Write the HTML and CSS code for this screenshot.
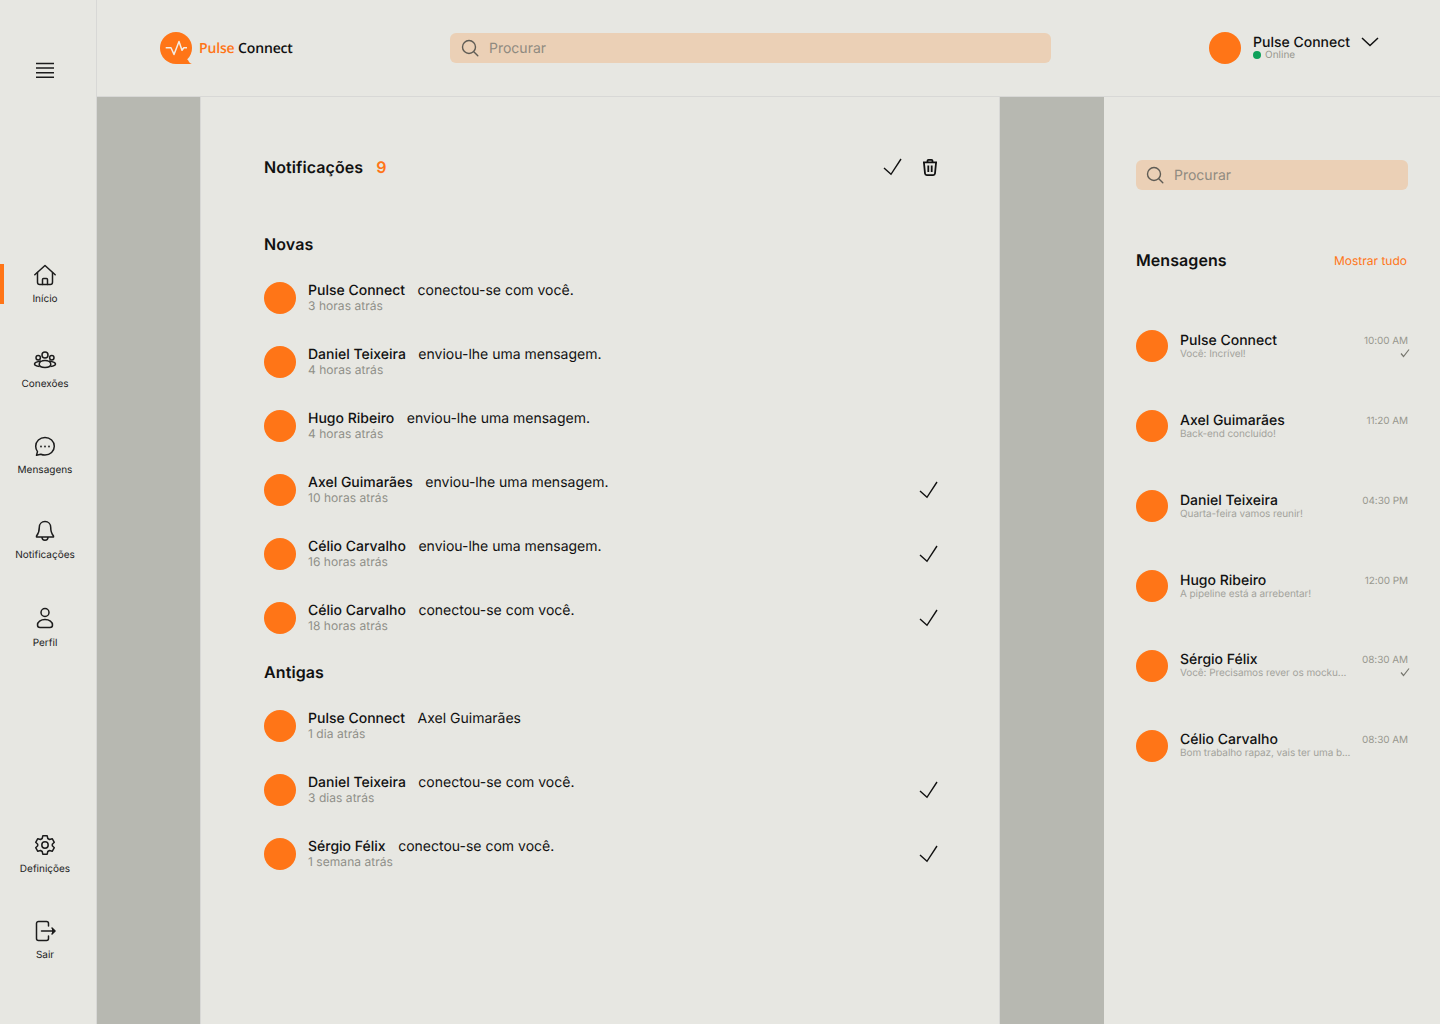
FILE: index.html
```html
<!DOCTYPE html>
<html lang="pt">
<head>
    <meta charset="UTF-8">
    <title>Pulse Connect</title>
    <link rel="stylesheet" href="styles.css">
</head>
<body>
<div class="app">
    <aside class="sidebar">
        <div class="menu-btn">
            <svg width="24" height="24" viewBox="0 0 24 24" fill="none" stroke="#1c1c1c" stroke-width="1.5"><path d="M3 4.500h18M3 9h18M3 13.700h18M3 18.300h18"/></svg>
        </div>
        <nav class="nav-main">
            <a class="nav-item active">
                <svg width="24" height="24" viewBox="0 0 24 24" fill="none" stroke="#1c1c1c" stroke-width="1.5" stroke-linejoin="round" stroke-linecap="round"><path d="M1.800 10.800 12 1.500l10.200 9.300"/><path d="M4.500 8.500v9.700a2.300 2.300 0 0 0 2.300 2.300h10.400a2.300 2.300 0 0 0 2.300-2.300V8.500"/><path d="M9.500 20.500v-5a1 1 0 0 1 1-1h3a1 1 0 0 1 1 1v5"/></svg>
                <span>Início</span>
            </a>
            <a class="nav-item">
                <svg width="24" height="24" viewBox="0 0 24 24" fill="none" stroke="#1c1c1c" stroke-width="1.5"><circle cx="12" cy="6" r="3"/><circle cx="5.200" cy="8.800" r="2.200"/><circle cx="18.800" cy="8.800" r="2.200"/><path d="M8 12c-3 .5-6.500 1.200-6.500 3 0 1.600 2.600 2.200 5 2.500"/><path d="M16 12c3 .5 6.500 1.200 6.500 3 0 1.600-2.600 2.200-5 2.500"/><path d="M12 11.500c-3.400 0-5.800 1.700-5.800 3.700s2.400 3.200 5.800 3.200 5.800-1.200 5.800-3.200-2.400-3.700-5.800-3.700Z"/></svg>
                <span>Conexões</span>
            </a>
            <a class="nav-item">
                <svg width="24" height="24" viewBox="0 0 24 24" fill="none" stroke="#1c1c1c" stroke-width="1.5" stroke-linejoin="round"><path d="M12 2.500c5.200 0 9.300 3.900 9.300 8.800s-4.100 8.800-9.300 8.800c-1.500 0-2.900-.3-4.200-.9l-4.300 1.100 1-3.700a8.500 8.500 0 0 1-1.800-5.300C2.700 6.400 6.800 2.500 12 2.500Z"/><circle cx="8" cy="11.500" r=".9" fill="#1c1c1c" stroke="none"/><circle cx="12" cy="11.500" r=".9" fill="#1c1c1c" stroke="none"/><circle cx="16" cy="11.500" r=".9" fill="#1c1c1c" stroke="none"/></svg>
                <span>Mensagens</span>
            </a>
            <a class="nav-item">
                <svg width="24" height="24" viewBox="0 0 24 24" fill="none" stroke="#1c1c1c" stroke-width="1.5" stroke-linejoin="round"><path d="M12 1.500c-3.400 0-5.700 2.600-5.700 5.800 0 4.200-.6 6.200-2.800 8.700v1h17v-1c-2.200-2.500-2.800-4.500-2.800-8.700C17.700 4.100 15.400 1.500 12 1.500Z"/><path d="M9 17c0 2 1.300 3.300 3 3.300s3-1.300 3-3.300"/></svg>
                <span>Notificações</span>
            </a>
            <a class="nav-item profile">
                <svg width="24" height="24" viewBox="0 0 24 24" fill="none" stroke="#1c1c1c" stroke-width="1.5"><circle cx="12" cy="5.500" r="4"/><path d="M12 12.500c-4.400 0-7.500 2.500-7.500 5.500 0 1.500 1 2.500 2.500 2.500h10c1.500 0 2.500-1 2.500-2.500 0-3-3.100-5.500-7.500-5.500Z"/></svg>
                <span>Perfil</span>
            </a>
        </nav>
        <nav class="nav-bottom">
            <a class="nav-item">
                <svg width="24" height="24" viewBox="0 0 24 24" fill="none" stroke="#1c1c1c" stroke-width="1.5" stroke-linejoin="round"><circle cx="12" cy="12" r="3.200"/><path d="M9.800 2.800h4.400l.6 2.700 1.700 1 2.700-.8 2.100 3.600-2 1.900v1.600l2 1.900-2.100 3.600-2.700-.8-1.700 1-.6 2.700H9.800l-.6-2.700-1.700-1-2.700.8-2.100-3.600 2-1.900v-1.600l-2-1.900 2.100-3.600 2.700.8 1.700-1Z"/></svg>
                <span>Definições</span>
            </a>
            <a class="nav-item">
                <svg width="24" height="24" viewBox="0 0 24 24" fill="none" stroke="#1c1c1c" stroke-width="1.500" stroke-linejoin="round" stroke-linecap="round"><path d="M15.500 7V4.500a2 2 0 0 0-2-2H5.500a2 2 0 0 0-2 2v15a2 2 0 0 0 2 2h8a2 2 0 0 0 2-2V17"/><path d="M8.500 12h13"/><path d="m19 9 3 3-3 3" fill="#1c1c1c"/></svg>
                <span>Sair</span>
            </a>
        </nav>
    </aside>

    <div class="content">
        <header class="topbar">
            <div class="logo">
                <svg width="33" height="33" viewBox="0 0 33 33"><circle cx="16" cy="16" r="16" fill="#ff7517"/><path d="M16 32h16c-1.800-.5-3-1.500-3.700-3.500L24 24Z" fill="#ff7517"/><path d="M5.700 15.700H11l3 6.800 5-13 3 8.700 1.800-2.500H27" fill="none" stroke="#f3ece4" stroke-width="1.500" stroke-linejoin="round"/></svg>
                <span class="logo-text"><em>Pulse</em> Connect</span>
            </div>
            <div class="search search-top">
                <svg width="20" height="20" viewBox="0 0 20 20" fill="none" stroke="#5f5c55" stroke-width="1.400" stroke-linecap="round"><circle cx="9" cy="9" r="6.500"/><path d="m14 14 3.800 3.800"/></svg>
                <span>Procurar</span>
            </div>
            <div class="user">
                <div class="avatar"></div>
                <div class="user-info">
                    <div class="name">Pulse Connect</div>
                    <div class="status"><i class="dot"></i>Online</div>
                </div>
                <svg class="chevron" width="18" height="10" viewBox="0 0 18 10" fill="none" stroke="#111" stroke-width="1.500"><path d="m1 1 8 7.500L17 1"/></svg>
            </div>
        </header>

        <div class="body">
            <div class="gutter"></div>
            <main class="panel">
                <div class="panel-head">
                    <h1>Notificações <b>9</b></h1>
                    <div class="panel-actions">
                        <svg width="24" height="24" viewBox="0 0 24 24" fill="none" stroke="#111" stroke-width="1.400"><path d="m4 13 7 6.300L21 4"/></svg>
                        <svg width="24" height="24" viewBox="0 0 24 24" fill="none" stroke="#111" stroke-width="1.800" stroke-linejoin="round"><path d="M6 8l1 10.500a1.800 1.800 0 0 0 1.800 1.600h6.400a1.800 1.800 0 0 0 1.800-1.600L18 8"/><path d="M5 7.300h14M9.500 7V5.800a1 1 0 0 1 1-1h3a1 1 0 0 1 1 1V7"/><path d="M10.300 10.500v6.500M13.700 10.500v6.500"/></svg>
                    </div>
                </div>

                <h2 class="group-title">Novas</h2>
                <ul class="notif-list">
                    <li class="notif">
                        <div class="avatar"></div>
                        <div class="notif-text"><p><strong>Pulse Connect</strong>conectou-se com você.</p><small>3 horas atrás</small></div>
                    </li>
                    <li class="notif">
                        <div class="avatar"></div>
                        <div class="notif-text"><p><strong>Daniel Teixeira</strong>enviou-lhe uma mensagem.</p><small>4 horas atrás</small></div>
                    </li>
                    <li class="notif">
                        <div class="avatar"></div>
                        <div class="notif-text"><p><strong>Hugo Ribeiro</strong>enviou-lhe uma mensagem.</p><small>4 horas atrás</small></div>
                    </li>
                    <li class="notif">
                        <div class="avatar"></div>
                        <div class="notif-text"><p><strong>Axel Guimarães</strong>enviou-lhe uma mensagem.</p><small>10 horas atrás</small></div>
                        <svg class="check" width="24" height="24" viewBox="0 0 24 24" fill="none" stroke="#111" stroke-width="1.400"><path d="m4 13 7 6.300L21 4"/></svg>
                    </li>
                    <li class="notif">
                        <div class="avatar"></div>
                        <div class="notif-text"><p><strong>Célio Carvalho</strong>enviou-lhe uma mensagem.</p><small>16 horas atrás</small></div>
                        <svg class="check" width="24" height="24" viewBox="0 0 24 24" fill="none" stroke="#111" stroke-width="1.400"><path d="m4 13 7 6.300L21 4"/></svg>
                    </li>
                    <li class="notif">
                        <div class="avatar"></div>
                        <div class="notif-text"><p><strong>Célio Carvalho</strong>conectou-se com você.</p><small>18 horas atrás</small></div>
                        <svg class="check" width="24" height="24" viewBox="0 0 24 24" fill="none" stroke="#111" stroke-width="1.400"><path d="m4 13 7 6.300L21 4"/></svg>
                    </li>
                </ul>

                <h2 class="group-title old">Antigas</h2>
                <ul class="notif-list">
                    <li class="notif">
                        <div class="avatar"></div>
                        <div class="notif-text"><p><strong>Pulse Connect</strong>Axel Guimarães</p><small>1 dia atrás</small></div>
                    </li>
                    <li class="notif">
                        <div class="avatar"></div>
                        <div class="notif-text"><p><strong>Daniel Teixeira</strong>conectou-se com você.</p><small>3 dias atrás</small></div>
                        <svg class="check" width="24" height="24" viewBox="0 0 24 24" fill="none" stroke="#111" stroke-width="1.400"><path d="m4 13 7 6.300L21 4"/></svg>
                    </li>
                    <li class="notif">
                        <div class="avatar"></div>
                        <div class="notif-text"><p><strong>Sérgio Félix</strong>conectou-se com você.</p><small>1 semana atrás</small></div>
                        <svg class="check" width="24" height="24" viewBox="0 0 24 24" fill="none" stroke="#111" stroke-width="1.400"><path d="m4 13 7 6.300L21 4"/></svg>
                    </li>
                </ul>
            </main>
            <div class="gutter"></div>

            <section class="messages">
                <div class="search">
                    <svg width="20" height="20" viewBox="0 0 20 20" fill="none" stroke="#5f5c55" stroke-width="1.400" stroke-linecap="round"><circle cx="9" cy="9" r="6.500"/><path d="m14 14 3.800 3.800"/></svg>
                    <span>Procurar</span>
                </div>
                <div class="messages-head">
                    <h2>Mensagens</h2>
                    <a>Mostrar tudo</a>
                </div>
                <ul class="msg-list">
                    <li class="msg">
                        <div class="avatar"></div>
                        <div class="msg-text"><div class="name">Pulse Connect</div><small>Você: Incrível!</small></div>
                        <div class="msg-meta"><time>10:00 AM</time><svg width="10" height="10" viewBox="0 0 10 10" fill="none" stroke="#77776f" stroke-width="1.200"><path d="m1 5.500 2.500 3L9 1.500"/></svg></div>
                    </li>
                    <li class="msg">
                        <div class="avatar"></div>
                        <div class="msg-text"><div class="name">Axel Guimarães</div><small>Back-end concluído!</small></div>
                        <div class="msg-meta"><time>11:20 AM</time></div>
                    </li>
                    <li class="msg">
                        <div class="avatar"></div>
                        <div class="msg-text"><div class="name">Daniel Teixeira</div><small>Quarta-feira vamos reunir!</small></div>
                        <div class="msg-meta"><time>04:30 PM</time></div>
                    </li>
                    <li class="msg">
                        <div class="avatar"></div>
                        <div class="msg-text"><div class="name">Hugo Ribeiro</div><small>A pipeline está a arrebentar!</small></div>
                        <div class="msg-meta"><time>12:00 PM</time></div>
                    </li>
                    <li class="msg">
                        <div class="avatar"></div>
                        <div class="msg-text up"><div class="name">Sérgio Félix</div><small>Você: Precisamos rever os mocku...</small></div>
                        <div class="msg-meta up"><time>08:30 AM</time><svg width="10" height="10" viewBox="0 0 10 10" fill="none" stroke="#77776f" stroke-width="1.200"><path d="m1 5.500 2.500 3L9 1.500"/></svg></div>
                    </li>
                    <li class="msg">
                        <div class="avatar"></div>
                        <div class="msg-text up"><div class="name">Célio Carvalho</div><small>Bom trabalho rapaz, vais ter uma b...</small></div>
                        <div class="msg-meta up"><time>08:30 AM</time></div>
                    </li>
                </ul>
            </section>
        </div>
    </div>
</div>
</body>
</html>
```

FILE: styles.css
```css
*{
    margin: 0;
    padding: 0;
    box-sizing: border-box;
}
html,body{
    height: 100%;
    overflow: hidden;
}
body{
    background: #e7e7e2;
    font-family: "Inter", "Liberation Sans", sans-serif;
    color: #111;
    text-rendering: geometricPrecision;
}
ul{
    list-style: none;
}
svg{
    flex: none;
}
.app{
    display: flex;
    height: 1024px;
}

/* sidebar */
.sidebar{
    width: 97px;
    flex: none;
    border-right: 1px solid #d8d8d6;
    display: flex;
    flex-direction: column;
}
.menu-btn{
    display: flex;
    justify-content: center;
    padding-top: 59px;
    padding-right: 6px;
}
.nav-main{
    margin-top: 181px;
    display: flex;
    flex-direction: column;
    gap: 45.25px;
}
.nav-bottom{
    margin-top: auto;
    margin-bottom: 64px;
    display: flex;
    flex-direction: column;
    gap: 46px;
}
.nav-bottom .nav-item{
    gap: 6px;
}
.nav-bottom svg{
    margin-top: -1px;
}
.nav-item{
    position: relative;
    height: 40px;
    display: flex;
    flex-direction: column;
    align-items: center;
    gap: 5px;
    padding-right: 6px;
    font-size: 10px;
    line-height: 12px;
    color: #222;
}
.nav-item.profile{
    margin-top: 2px;
    gap: 6px;
}
.nav-item.active::before{
    content: "";
    position: absolute;
    left: 0;
    top: 0;
    width: 4px;
    height: 40px;
    background: #ff7517;
}

/* top bar */
.content{
    flex: 1;
    display: flex;
    flex-direction: column;
    min-width: 0;
}
.topbar{
    height: 97px;
    flex: none;
    border-bottom: 1px solid #d8d8d6;
    display: flex;
    align-items: center;
    padding-left: 63px;
}
.logo{
    width: 290px;
    display: flex;
    align-items: center;
    gap: 6px;
}
.logo-text{
    font-family: "Open Sans", sans-serif;
    font-weight: 600;
    font-size: 14px;
    letter-spacing: -.15px;
    color: #111;
}
.logo-text em{
    font-style: normal;
    color: #ff7517;
}
.search{
    height: 30px;
    background: #ebd0b6;
    border-radius: 6px;
    display: flex;
    align-items: center;
    gap: 9px;
    padding-left: 9px;
    font-size: 14px;
    color: #8f8a80;
}
.search-top{
    width: 601px;
    padding-left: 10px;
}
.user{
    margin-left: 158px;
    display: flex;
    align-items: center;
}
.avatar{
    width: 32px;
    height: 32px;
    flex: none;
    border-radius: 50%;
    background: #ff7517;
}
.user-info{
    margin-left: 12px;
    margin-top: -1px;
}
.name{
    font-size: 14px;
    line-height: 15px;
    font-weight: 500;
    color: #111;
}
.status{
    display: flex;
    align-items: center;
    gap: 4px;
    margin-top: -1px;
    font-size: 10px;
    line-height: 12px;
    color: #98988f;
}
.dot{
    width: 8px;
    height: 8px;
    border-radius: 50%;
    background: #0ea15a;
}
.chevron{
    margin-left: 11px;
    margin-top: -12px;
}

/* body columns */
.body{
    flex: 1;
    display: flex;
    min-height: 0;
}
.gutter{
    width: 104px;
    flex: none;
    background: #b7b8b1;
}
.gutter:first-of-type{
    width: 103px;
}
.panel{
    width: 800px;
    flex: none;
    padding: 58px 59px 0 63px;
    border-left: 1px solid #d8d8d6;
    border-right: 1px solid #d8d8d6;
}
.panel-head{
    display: flex;
    justify-content: space-between;
    align-items: center;
    height: 24px;
}
.panel-head h1{
    font-size: 16px;
    font-weight: 600;
    letter-spacing: .08px;
}
.panel-head h1 b{
    color: #ff7517;
    font-weight: 600;
    margin-left: 9px;
}
.panel-actions{
    display: flex;
    gap: 14px;
    margin-right: -2px;
}
.group-title{
    font-size: 16px;
    line-height: 20px;
    font-weight: 600;
    letter-spacing: .1px;
    margin-top: 55px;
    margin-bottom: 28px;
}
.group-title.old{
    margin-top: 28px;
    margin-bottom: 28px;
}
.notif{
    height: 32px;
    display: flex;
    align-items: center;
    margin-bottom: 32px;
}
.notif-list .notif:last-child{
    margin-bottom: 0;
}
.notif-text{
    margin-left: 12px;
    flex: 1;
}
.notif-text p{
    font-size: 14px;
    line-height: 15px;
    color: #111;
}
.notif-text strong{
    font-weight: 500;
    margin-right: 12.5px;
}
.notif-text small{
    display: block;
    margin-top: 1px;
    font-size: 12px;
    line-height: 14px;
    letter-spacing: .05px;
    color: #8f8f88;
}

/* messages column */
.messages{
    flex: 1;
    padding: 63px 32px 0 32px;
}
.messages-head{
    margin-top: 59px;
    height: 22px;
    display: flex;
    justify-content: space-between;
    align-items: center;
}
.messages-head h2{
    font-size: 16px;
    font-weight: 600;
    letter-spacing: .07px;
}
.messages-head a{
    margin-right: 1px;
    font-size: 12px;
    color: #ff7517;
}
.msg-list{
    margin-top: 59px;
    display: flex;
    flex-direction: column;
    gap: 48px;
}
.msg{
    height: 32px;
    display: flex;
    position: relative;
}
.msg-text{
    margin-left: 12px;
    flex: 1;
    padding-top: 3px;
}
.msg-text.up{
    padding-top: 2px;
}
.msg-text small{
    display: block;
    margin-top: 1px;
    font-size: 10px;
    line-height: 10px;
    letter-spacing: -.08px;
    color: #a3a39c;
}
.msg-meta{
    position: absolute;
    right: 0;
    top: 5px;
    display: flex;
    flex-direction: column;
    align-items: flex-end;
    font-size: 10px;
    line-height: 12px;
    letter-spacing: -.08px;
    color: #98988f;
}
.msg-meta.up{
    top: 4px;
}
.msg-meta svg{
    margin-top: 1px;
    margin-right: -2px;
}
```
